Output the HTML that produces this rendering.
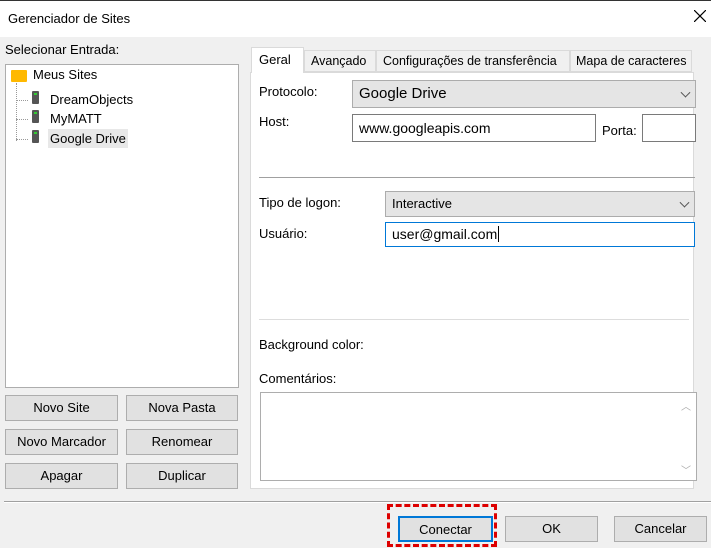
<!DOCTYPE html><html><head><style>
body{margin:0;width:711px;height:548px;background:#f0f0f0;font-family:"Liberation Sans",sans-serif;font-size:13px;color:#000;position:relative;overflow:hidden}
.a{position:absolute}
.btn{position:absolute;background:#e1e1e1;border:1px solid #adadad;box-sizing:border-box;text-align:center;font-size:13px}
.inp{position:absolute;background:#fff;border:1px solid #7a7a7a;box-sizing:border-box;padding-left:6px;font-size:14px}
.sel{position:absolute;background:#e5e5e5;border:1px solid #acacac;box-sizing:border-box;padding-left:6px}
.chev{position:absolute;right:6px;top:50%;width:6px;height:6px;border-right:1px solid #555;border-bottom:1px solid #555;transform:translateY(-70%) rotate(45deg)}
.srv{position:absolute;width:7px;height:13px;background:#555;border-radius:1px}
.srv:after{content:"";position:absolute;left:2px;top:2px;width:3px;height:2px;background:#3c3}
.dot{position:absolute;border-top:1px dotted #999}
.tab{position:absolute;top:54px;font-size:12.5px}
</style></head><body>
<div class="a" style="left:0;top:0;width:711px;height:37px;background:#fff;border-top:1px solid #333;box-sizing:border-box"></div>
<div class="a" style="left:8px;top:11px;font-size:13px">Gerenciador de Sites</div>
<svg class="a" style="left:694px;top:10px" width="12" height="12"><path d="M0 0L12 12M12 0L0 12" stroke="#000" stroke-width="1.2"/></svg>
<div class="a" style="left:5px;top:42px">Selecionar Entrada:</div>
<div class="a" style="left:5px;top:64px;width:234px;height:324px;background:#fff;border:1px solid #adadad;box-sizing:border-box"></div>
<div class="a" style="left:11px;top:70px;width:16px;height:12px;background:#ffb900;border-radius:1px"></div>
<div class="a" style="left:33px;top:67px">Meus Sites</div>
<div class="a" style="left:16px;top:83px;height:58px;border-left:1px dotted #999"></div>
<div class="dot" style="left:16px;top:100px;width:12px"></div>
<div class="dot" style="left:16px;top:119px;width:12px"></div>
<div class="dot" style="left:16px;top:139px;width:12px"></div>
<div class="srv" style="left:32px;top:91px"></div><div class="srv" style="left:32px;top:110px"></div><div class="srv" style="left:32px;top:130px"></div>
<div class="a" style="left:50px;top:92px">DreamObjects</div>
<div class="a" style="left:50px;top:111px">MyMATT</div>
<div class="a" style="left:48px;top:129px;background:#e8e8e8;padding:2px 2px">Google Drive</div>
<div class="btn" style="left:5px;top:395px;width:113px;height:26px;line-height:24px">Novo Site</div>
<div class="btn" style="left:126px;top:395px;width:112px;height:26px;line-height:24px">Nova Pasta</div>
<div class="btn" style="left:5px;top:429px;width:113px;height:26px;line-height:24px">Novo Marcador</div>
<div class="btn" style="left:126px;top:429px;width:112px;height:26px;line-height:24px">Renomear</div>
<div class="btn" style="left:5px;top:463px;width:113px;height:26px;line-height:24px">Apagar</div>
<div class="btn" style="left:126px;top:463px;width:112px;height:26px;line-height:24px">Duplicar</div>
<div class="a" style="left:250px;top:72px;width:444px;height:417px;background:#fff;border:1px solid #dadada;box-sizing:border-box"></div>
<div class="a" style="left:304px;top:50px;width:72px;height:22px;background:#f0f0f0;border:1px solid #dadada;box-sizing:border-box"></div>
<div class="a" style="left:376px;top:50px;width:194px;height:22px;background:#f0f0f0;border:1px solid #dadada;box-sizing:border-box"></div>
<div class="a" style="left:570px;top:50px;width:122px;height:22px;background:#f0f0f0;border:1px solid #dadada;box-sizing:border-box"></div>
<div class="a" style="left:251px;top:47px;width:53px;height:26px;background:#fff;border:1px solid #dadada;border-bottom:none;box-sizing:border-box"></div>
<div class="a" style="left:259px;top:52px">Geral</div>
<div class="tab" style="left:311px">Avançado</div>
<div class="tab" style="left:383px">Configurações de transferência</div>
<div class="tab" style="left:576px">Mapa de caracteres</div>
<div class="a" style="left:259px;top:84px">Protocolo:</div>
<div class="sel" style="left:352px;top:80px;width:344px;height:28px;line-height:26px;font-size:15px">Google Drive<span class="chev"></span></div>
<div class="a" style="left:259px;top:114px">Host:</div>
<div class="inp" style="left:352px;top:114px;width:244px;height:28px;line-height:26px">www.googleapis.com</div>
<div class="a" style="left:602px;top:123px">Porta:</div>
<div class="inp" style="left:642px;top:114px;width:54px;height:28px"></div>
<div class="a" style="left:259px;top:177px;width:436px;height:1px;background:#a0a0a0"></div>
<div class="a" style="left:259px;top:195px">Tipo de logon:</div>
<div class="sel" style="left:385px;top:191px;width:310px;height:26px;line-height:24px">Interactive<span class="chev"></span></div>
<div class="a" style="left:259px;top:226px">Usuário:</div>
<div class="inp" style="left:385px;top:222px;width:310px;height:25px;line-height:23px;border-color:#0078d7">user@gmail.com<span style="border-left:1px solid #000;margin-left:1px"></span></div>
<div class="a" style="left:259px;top:319px;width:430px;height:1px;background:#ddd"></div>
<div class="a" style="left:259px;top:337px">Background color:</div>
<div class="a" style="left:259px;top:371px">Comentários:</div>
<div class="a" style="left:260px;top:392px;width:437px;height:89px;background:#fff;border:1px solid #adadad;box-sizing:border-box"></div>
<div class="a" style="left:681px;top:398px;color:#aaa;font-size:10px">︿</div>
<div class="a" style="left:681px;top:462px;color:#aaa;font-size:10px">﹀</div>
<div class="a" style="left:4px;top:501px;width:707px;height:1px;background:#a0a0a0"></div>
<div class="a" style="left:4px;top:502px;width:707px;height:1px;background:#fff"></div>
<div class="btn" style="left:398px;top:516px;width:95px;height:26px;line-height:24px;border:2px solid #0078d7">Conectar</div>
<div class="btn" style="left:505px;top:516px;width:93px;height:26px;line-height:24px">OK</div>
<div class="btn" style="left:614px;top:516px;width:93px;height:26px;line-height:24px">Cancelar</div>
<div class="a" style="left:387px;top:504px;width:110px;height:43px;border:3px dashed #d00;box-sizing:border-box"></div>
</body></html>
